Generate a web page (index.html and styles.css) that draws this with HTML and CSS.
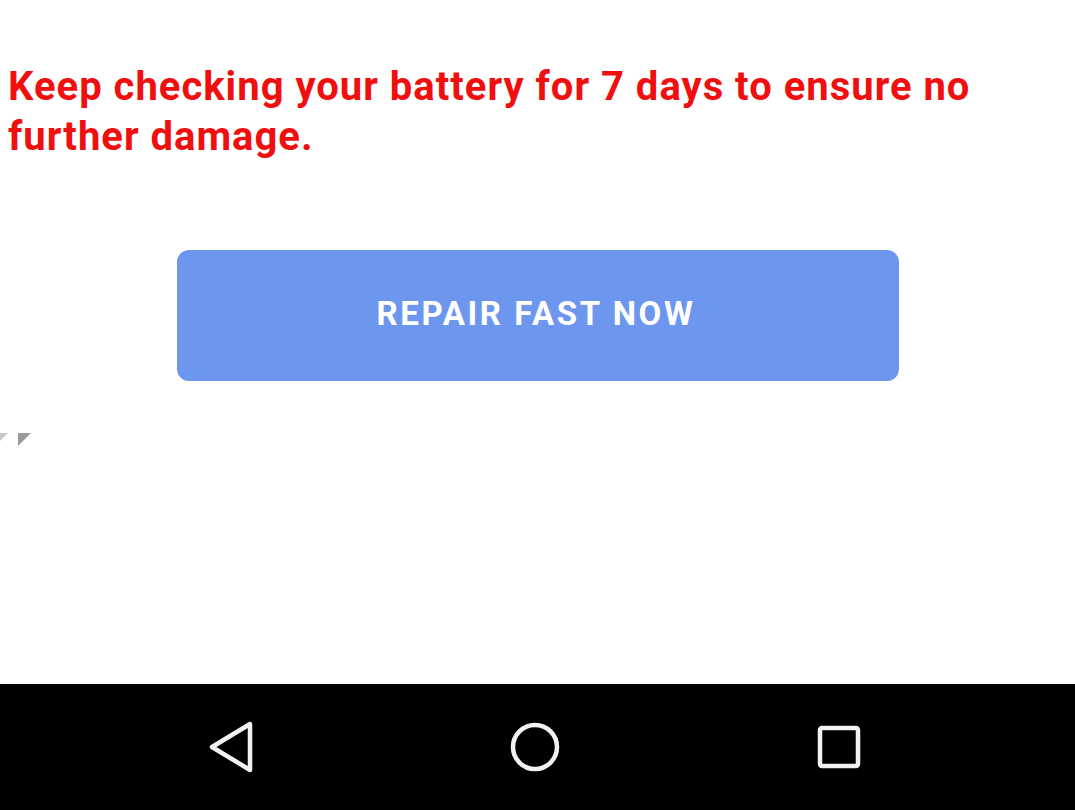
FILE: index.html
```html
<!DOCTYPE html>
<html>
<head>
<meta charset="utf-8">
<link rel="stylesheet" href="styles.css">
</head>
<body>
<div class="screen">
  <main class="content">
    <p class="warning">Keep checking your battery for 7 days to ensure no further damage.</p>
    <div class="btn-row">
      <button class="repair">REPAIR FAST NOW</button>
    </div>
    <div class="marks">
      <span class="mark mark-a"></span>
      <span class="mark mark-b"></span>
    </div>
  </main>
  <nav class="navbar">
    <svg class="nav-icon" width="60" height="60" viewBox="0 0 60 60">
      <path d="M49 7 L49 53 L11 30 Z" fill="none" stroke="#f2f2f2" stroke-width="4.5" stroke-linejoin="round"/>
    </svg>
    <svg class="nav-icon" width="60" height="60" viewBox="0 0 60 60">
      <circle cx="30" cy="30" r="22" fill="none" stroke="#f2f2f2" stroke-width="4.5"/>
    </svg>
    <svg class="nav-icon" width="60" height="60" viewBox="0 0 60 60">
      <rect x="11" y="11" width="38" height="38" rx="2" fill="none" stroke="#f2f2f2" stroke-width="4.5"/>
    </svg>
  </nav>
</div>
</body>
</html>
```

FILE: styles.css
```css
html, body {
  margin: 0;
  padding: 0;
  background: #ffffff;
}
.screen {
  width: 1075px;
  height: 810px;
  display: flex;
  flex-direction: column;
  overflow: hidden;
}
.content {
  flex: 1;
  display: flex;
  flex-direction: column;
}
.warning {
  margin: 62px 0 0 8px;
  width: 1010px;
  font-family: Roboto, "Liberation Sans", sans-serif;
  font-weight: 700;
  font-size: 40px;
  letter-spacing: 1px;
  line-height: 50px;
  color: #f00f0f;
}
.btn-row {
  display: flex;
  justify-content: center;
  margin-top: 88px;
}
.repair {
  width: 722px;
  height: 131px;
  border: none;
  border-radius: 12px;
  background: #6d96ee;
  color: #ffffff;
  font-family: Roboto, "Liberation Sans", sans-serif;
  font-weight: 700;
  font-size: 33px;
  letter-spacing: 2.6px;
  padding: 0 3px 4px 0;
}
.marks {
  display: flex;
  gap: 10px;
  margin-top: 52px;
}
.mark {
  width: 0;
  height: 0;
  border-top: 13px solid #9a9a9a;
  border-right: 13px solid transparent;
}
.mark-a {
  border-top-color: #c8c8c8;
  margin-left: -5px;
}
.navbar {
  height: 126px;
  background: #000000;
  display: flex;
  align-items: center;
  justify-content: center;
  gap: 244px;
  padding-right: 5px;
}
.nav-icon {
  display: block;
}
```
